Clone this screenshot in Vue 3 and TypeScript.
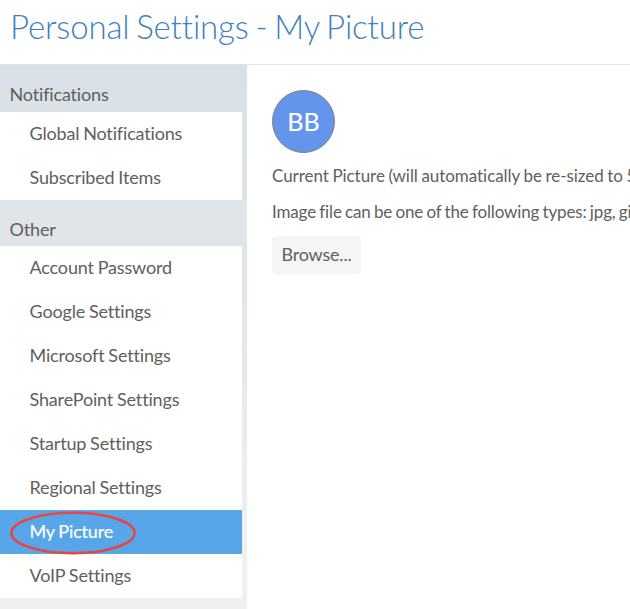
<script setup lang="ts">
interface Group { title: string; items: string[] }
const groups: Group[] = [
  { title: 'Notifications', items: ['Global Notifications', 'Subscribed Items'] },
  { title: 'Other', items: ['Account Password', 'Google Settings', 'Microsoft Settings', 'SharePoint Settings', 'Startup Settings', 'Regional Settings', 'My Picture', 'VoIP Settings'] },
]
const active = 'My Picture'
</script>

<template>
  <div class="page">
    <header class="head"><h1>Personal Settings - My Picture</h1></header>
    <div class="body">
      <nav class="side">
        <section v-for="g in groups" :key="g.title">
          <h2 :class="{ first: g.title === 'Notifications' }">{{ g.title }}</h2>
          <ul>
            <li v-for="i in g.items" :key="i" :class="{ active: i === active }">
              {{ i }}
              <svg v-if="i === active" class="ring" width="128" height="46" viewBox="0 0 128 46"><ellipse cx="64" cy="23" rx="61.6" ry="20.2" fill="none" stroke="#e8473f" stroke-width="2.6" /></svg>
            </li>
          </ul>
        </section>
      </nav>
      <main class="main">
        <div class="avatar">BB</div>
        <p class="p1">Current Picture (will automatically be re-sized to 5</p>
        <p class="p2">Image file can be one of the following types: jpg, gi</p>
        <button class="browse">Browse...</button>
      </main>
    </div>
  </div>
</template>

<style>
body { overflow: hidden; background: #fff; }
</style>
<style scoped>
.page { width: 630px; height: 609px; overflow: hidden; font-family: Lato, "Liberation Sans", sans-serif; color: #606060; display: flex; flex-direction: column; }
.head { height: 64px; border-bottom: 1px solid #e3e3e3; box-sizing: content-box; flex: none; }
h1 { margin: 0; padding-left: 10px; font-weight: 300; font-size: 33px; line-height: 52px; letter-spacing: -0.15px; word-spacing: -2px; color: #3f7fbf; white-space: nowrap; }
.body { display: flex; flex: 1; min-height: 0; }
.side { width: 242px; padding-right: 5px; background: linear-gradient(#d9e0e7, #e1e6e9 38%, #eff0f0 86%); flex: none; }
h2 { margin: 0; height: 46px; box-sizing: border-box; padding: 16px 0 0 9.5px; font-size: 18px; line-height: 26px; font-weight: 400; letter-spacing: -0.16px; }
h2.first { height: 47px; }
ul { list-style: none; margin: 0; padding: 0; background: #fff; }
li { position: relative; height: 44px; box-sizing: border-box; line-height: 42px; padding-left: 29.5px; font-size: 18px; letter-spacing: -0.16px; word-spacing: -0.6px; }
.active { background: #57a6ea; color: #fff; -webkit-text-stroke: 0.2px #fff; }
.ring { position: absolute; left: 9px; top: 0; }
.main { flex: 1; min-width: 0; overflow: hidden; padding: 25px 0 0 25px; }
.avatar { width: 63px; height: 63px; box-sizing: border-box; border: 1px solid #808080; border-radius: 50%; background: #6495ed; color: #fff; font-size: 25px; line-height: 60px; text-align: center; -webkit-text-stroke: 0.15px #fff; }
p { margin: 0; font-size: 17px; line-height: 24px; white-space: nowrap; letter-spacing: -0.05px; word-spacing: -0.7px; }
.p1 { margin-top: 11px; }
.p2 { margin-top: 12px; letter-spacing: -0.15px; word-spacing: -0.9px; }
.browse { display: block; margin-top: 12px; width: 89px; height: 38px; padding: 0 0 2px; border: 0; border-radius: 4px; background: #f5f5f5; color: #606060; font: 18px Lato, sans-serif; letter-spacing: -0.2px; }
</style>
